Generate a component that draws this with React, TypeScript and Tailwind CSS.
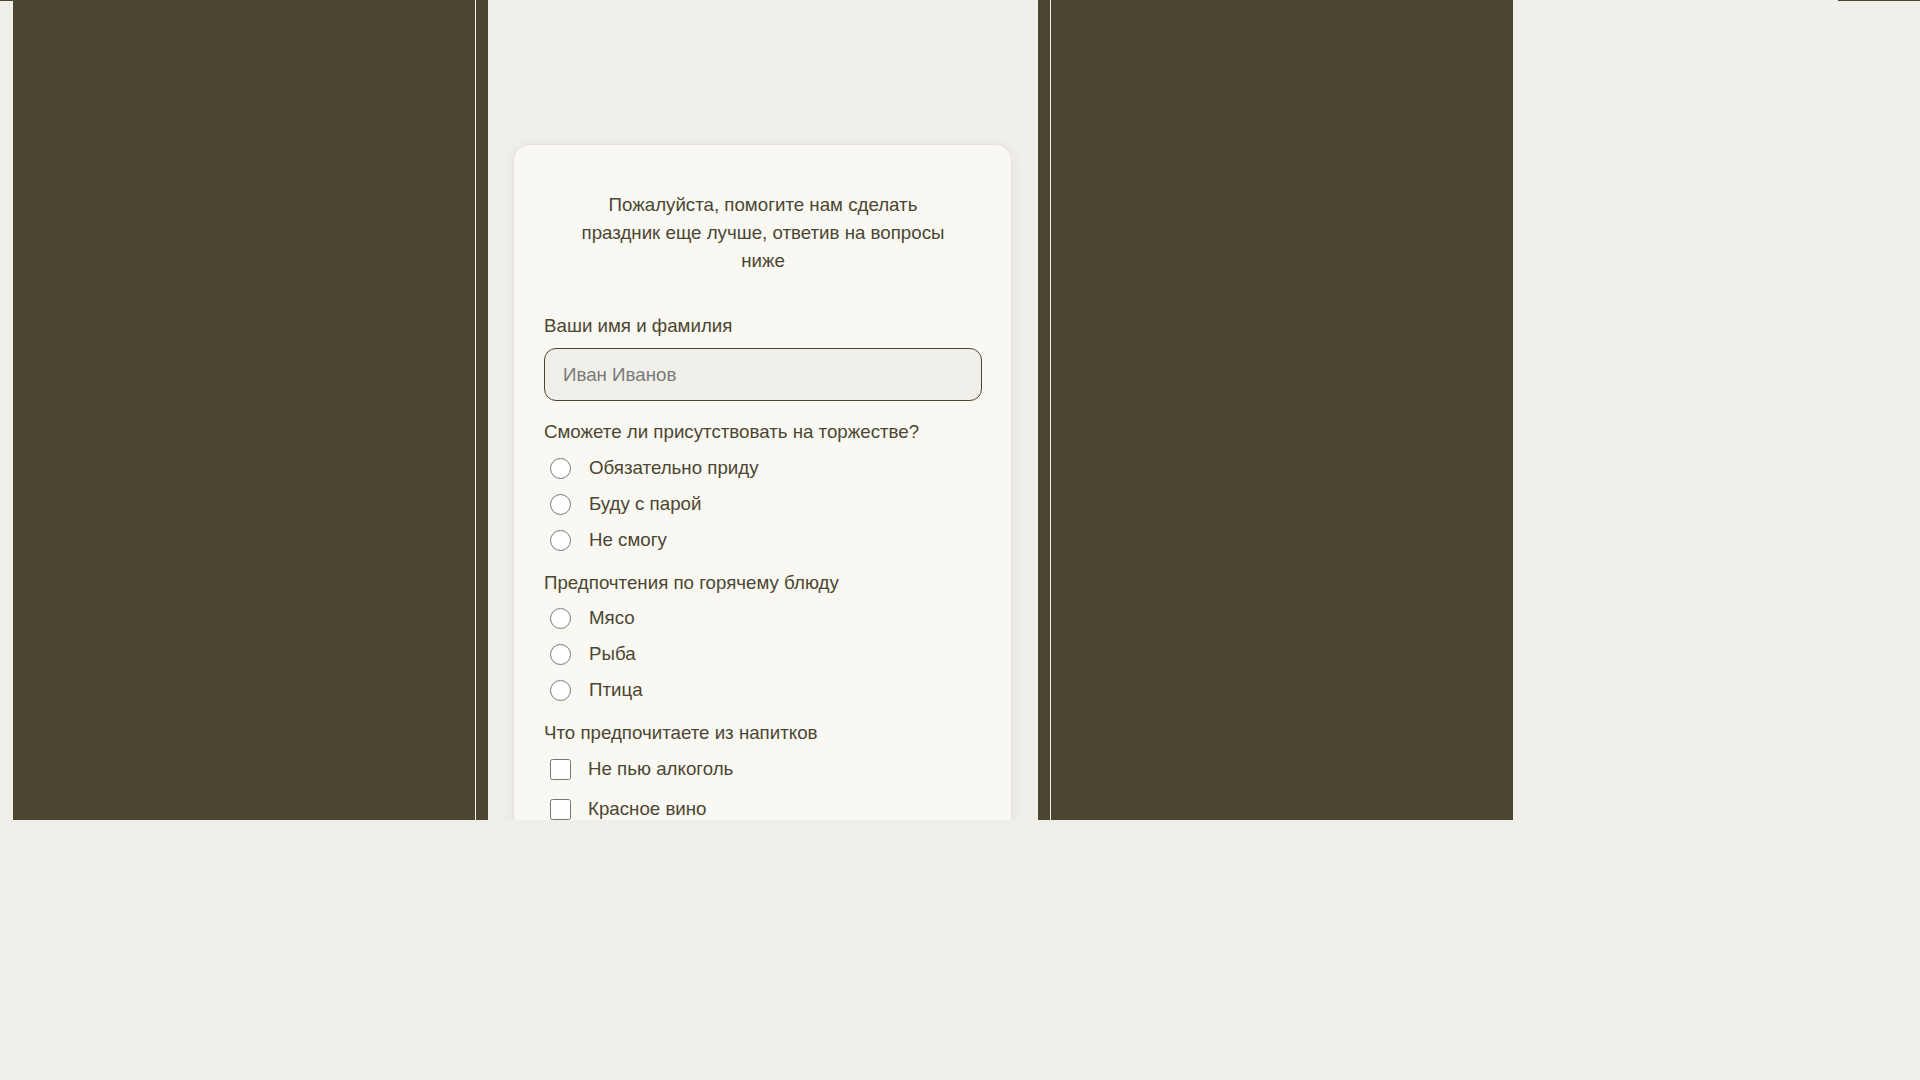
import React from "react";

const DARK = "bg-[#4b4632]";

function Radio({ name, label }: { name: string; label: string }) {
  return (
    <label className="flex h-9 items-center gap-[18px] pl-[6px] cursor-pointer">
      <input type="radio" name={name} className="m-0 h-[21px] w-[21px] shrink-0 accent-[#4b4632]" />
      <span>{label}</span>
    </label>
  );
}

function Check({ label }: { label: string }) {
  return (
    <label className="flex h-10 items-center gap-[17px] pl-[6px] cursor-pointer">
      <input type="checkbox" className="m-0 h-[21px] w-[21px] shrink-0 accent-[#4b4632]" />
      <span>{label}</span>
    </label>
  );
}

export default function App() {
  return (
    <div className="h-[1080px] w-full overflow-hidden bg-[#f0efea] font-['Liberation_Sans',Arial,sans-serif] text-[18.72px] text-[#4b4632]">
      <div className="flex h-[820px] overflow-hidden">
        {/* left light strip */}
        <div className="w-[13px] shrink-0 border-t border-[#4b4632]" />

        {/* left dark panel */}
        <div className="flex w-[475px] shrink-0">
          <div className={`w-[462px] ${DARK}`} />
          <div className="w-px bg-[#f0efea]" />
          <div className={`w-[12px] ${DARK}`} />
        </div>

        {/* middle panel with the form */}
        <div className="flex w-[550px] shrink-0 flex-col">
          <div className="flex h-px justify-end">
            <div className={`w-[13px] ${DARK}`} />
          </div>
          <div className="ml-[25px] mt-[144px] w-[499px] rounded-2xl border border-[#e6e3da] bg-[#faf8f2] pb-10 pl-[30px] pr-[29px] pt-[46px] shadow-[0_2px_14px_rgba(60,55,40,0.07)]">
            <p className="mx-auto mb-[39px] max-w-[380px] text-center leading-[28px]">
              Пожалуйста, помогите нам сделать праздник еще лучше, ответив на вопросы ниже
            </p>

            <div className="mb-[10px] leading-[24px]">Ваши имя и фамилия</div>
            <input
              type="text"
              placeholder="Иван Иванов"
              className="block h-[53px] w-full rounded-[12px] border border-[#4b4632] bg-[#f0efea] px-[18px] text-[18.72px] text-[#4b4632] outline-none placeholder:text-[#7a7a78]"
            />

            <div className="mt-[19px]">
              <div className="mb-[6px] leading-[24px]">Сможете ли присутствовать на торжестве?</div>
              <Radio name="attend" label="Обязательно приду" />
              <Radio name="attend" label="Буду с парой" />
              <Radio name="attend" label="Не смогу" />
            </div>

            <div className="mt-[13px]">
              <div className="mb-[5px] leading-[24px]">Предпочтения по горячему блюду</div>
              <Radio name="food" label="Мясо" />
              <Radio name="food" label="Рыба" />
              <Radio name="food" label="Птица" />
            </div>

            <div className="mt-[13px]">
              <div className="mb-[4px] leading-[24px]">Что предпочитаете из напитков</div>
              <Check label="Не пью алкоголь" />
              <Check label="Красное вино" />
            </div>
          </div>
        </div>

        {/* right dark panel */}
        <div className="flex w-[475px] shrink-0">
          <div className={`w-[12px] ${DARK}`} />
          <div className="w-px bg-[#f0efea]" />
          <div className={`w-[462px] ${DARK}`} />
        </div>

        {/* right light area */}
        <div className="flex flex-1 flex-col">
          <div className="flex h-px justify-end">
            <div className={`w-[82px] ${DARK}`} />
          </div>
        </div>
      </div>
    </div>
  );
}
